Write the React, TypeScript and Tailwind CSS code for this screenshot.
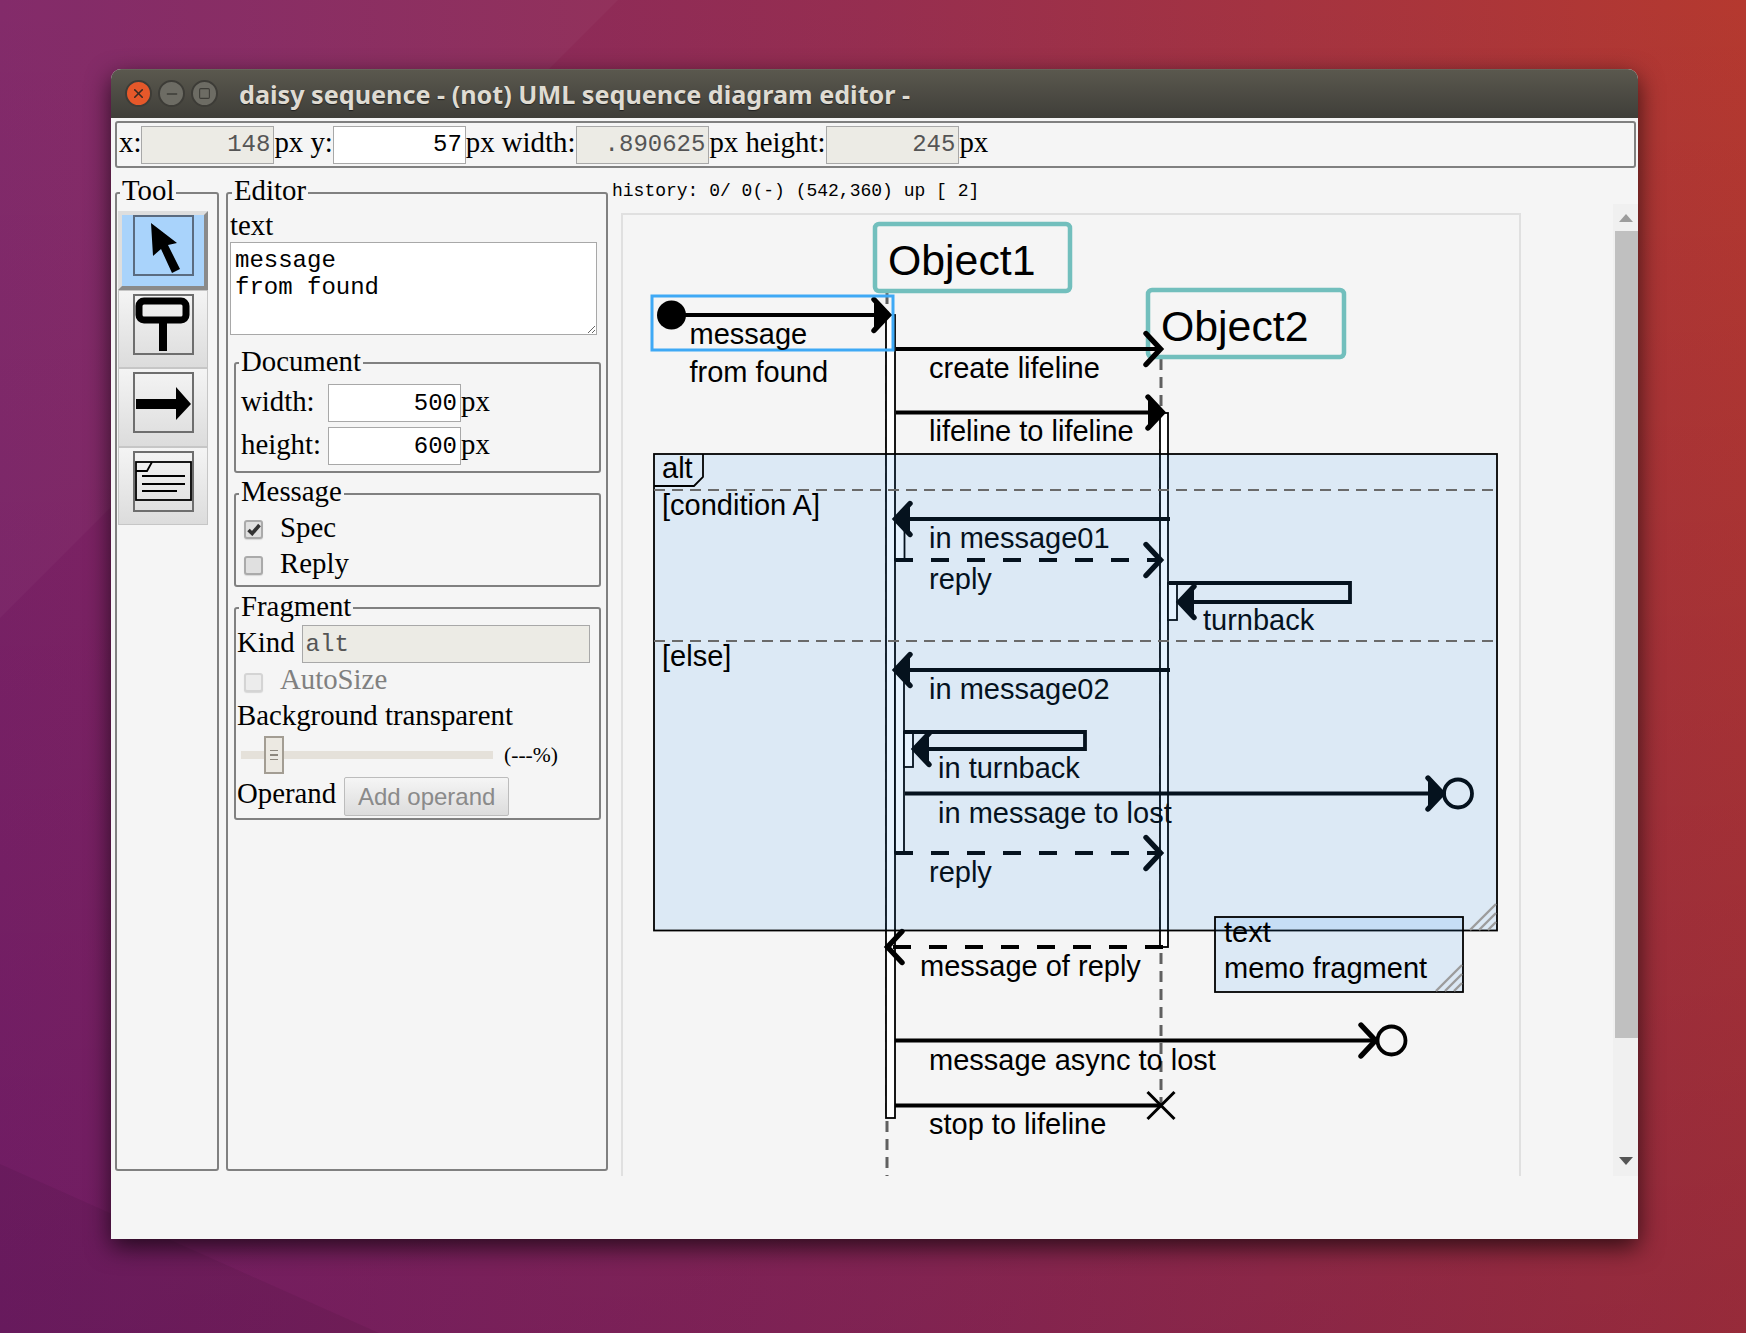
import { Minus, Square, X } from 'lucide-react';
import type { ReactNode } from 'react';

const mono = "[font-family:'Liberation_Mono',monospace]";

function Box({ legend, className, legendClass, children }: { legend: string; className: string; legendClass: string; children: ReactNode }) {
  return (
    <fieldset className={`border-2 border-[#808080] rounded-[3px] min-w-0 ${className}`}>
      <legend className={`relative leading-[33px] px-[2px] ${legendClass}`}>{legend}</legend>
      {children}
    </fieldset>
  );
}

function Field({ value, disabled, className = '' }: { value: string; disabled?: boolean; className?: string }) {
  return (
    <input
      readOnly
      value={value}
      className={`h-[38px] border border-[#a8a8a8] text-[24px] px-[3px] outline-none ${mono} ${
        disabled ? 'bg-[#ecebe5] text-[#555555]' : 'bg-white text-black'
      } ${className}`}
    />
  );
}

function Tick({ checked, disabled }: { checked?: boolean; disabled?: boolean }) {
  return (
    <span
      className={`w-[19px] h-[19px] rounded-[3px] border-2 flex items-center justify-center shadow-[0_1px_1px_#d8d8d8] ${
        disabled ? 'border-[#d4d4d4] bg-[#ececec]' : 'border-[#aaaaaa] bg-[#e0e0e0]'
      }`}
    >
      {checked && (
        <svg width="14" height="13" viewBox="0 0 14 13" className="block">
          <path d="M1.5 7 L5.2 10.5 L12.5 2" fill="none" stroke="#333333" strokeWidth="3.6" />
        </svg>
      )}
    </span>
  );
}

function ToolButton({ pressed, children }: { pressed?: boolean; children: ReactNode }) {
  return (
    <div
      className={`w-[90px] h-[78.5px] flex justify-center ${
        pressed
          ? 'bg-[#a9d3fb] border-[4px] border-t-[#dedede] border-l-[#dedede] border-r-[#8a8a8a] border-b-[#8a8a8a] pt-0'
          : 'bg-[linear-gradient(#f4f4f4,#dcdcdc)] border border-[#c6c6c6] pt-[3px]'
      }`}
    >
      <div className={`w-[61px] h-[61px] border-2 ${pressed ? 'border-[#5a6b80]' : 'border-[#6e6e6e]'}`}>
        <svg width="57" height="57" viewBox="2 2 57 57" className="block overflow-visible">
          {children}
        </svg>
      </div>
    </div>
  );
}

type MsgProps = { x1: number; x2: number; y: number; dashed?: boolean; head: 'fill' | 'open' };

// message arrow, x2 is the tip
function Msg({ x1, x2, y, dashed, head }: MsgProps) {
  const dir = x2 > x1 ? 1 : -1;
  return (
    <g>
      <line x1={x1} y1={y} x2={x2 - dir * 3} y2={y} stroke="#000" strokeWidth="3.8" strokeDasharray={dashed ? '18 18' : undefined} />
      <Head x={x2} y={y} dir={dir} head={head} />
    </g>
  );
}

function Head({ x, y, dir, head }: { x: number; y: number; dir: number; head: 'fill' | 'open' }) {
  return (
    <polyline
      points={`${x - dir * 17},${y - 15.5} ${x - dir * 2.5},${y} ${x - dir * 17},${y + 15.5}`}
      fill={head === 'fill' ? '#000' : 'none'}
      stroke="#000"
      strokeWidth="5.4"
      strokeLinecap="round"
      strokeLinejoin="miter"
    />
  );
}

function Hatch({ x, y }: { x: number; y: number }) {
  return (
    <g stroke="#9c9c9c" strokeWidth="2.4">
      <line x1={x - 27} y1={y - 1} x2={x - 1} y2={y - 27} />
      <line x1={x - 18} y1={y - 1} x2={x - 1} y2={y - 18} />
      <line x1={x - 9} y1={y - 1} x2={x - 1} y2={y - 9} />
    </g>
  );
}

function Diagram() {
  return (
    <svg
      width="896"
      height="961"
      viewBox="623 215 896 961"
      className="block [font-family:'Liberation_Sans',sans-serif] text-[29px]"
    >
      {/* lifelines */}
      <line x1="887" y1="293" x2="887" y2="1176" stroke="#606060" strokeWidth="3" strokeDasharray="11 7" />
      <line x1="1161" y1="359" x2="1161" y2="1105" stroke="#606060" strokeWidth="3" strokeDasharray="11 7" />

      {/* specs */}
      <rect x="886" y="315" width="9" height="803" fill="#fff" stroke="#000" strokeWidth="1.8" />
      <rect x="1160" y="413" width="8" height="534" fill="#fff" stroke="#000" strokeWidth="1.8" />
      <rect x="895" y="519" width="9.5" height="41" fill="#fff" stroke="#000" strokeWidth="1.8" />
      <rect x="895" y="670" width="9" height="183" fill="#fff" stroke="#000" strokeWidth="1.8" />
      <rect x="1168" y="583" width="9" height="37" fill="#fff" stroke="#000" strokeWidth="1.8" />
      <rect x="904" y="732" width="9" height="35" fill="#fff" stroke="#000" strokeWidth="1.8" />

      {/* objects */}
      <rect x="875" y="224" width="195" height="67" rx="4" fill="#f5f5f5" stroke="#72bfbd" strokeWidth="4.5" />
      <text x="888" y="275" className="text-[42.8px]">Object1</text>
      <rect x="1148" y="290" width="196" height="67" rx="4" fill="#f5f5f5" stroke="#72bfbd" strokeWidth="4.5" />
      <text x="1161" y="341" className="text-[42.8px]">Object2</text>

      {/* selected found message */}
      <circle cx="671.5" cy="315" r="14.5" fill="#000" />
      <Msg x1={671} x2={891} y={315} head="fill" />
      <rect x="652" y="296" width="241" height="54" fill="none" stroke="#3fa9f5" strokeWidth="3" />
      <text x="689.5" y="344">message</text>
      <text x="689.5" y="382">from found</text>

      <Msg x1={896} x2={1163} y={349} head="open" />
      <text x="929" y="378">create lifeline</text>
      <Msg x1={896} x2={1165} y={412.5} head="fill" />
      <text x="929" y="441">lifeline to lifeline</text>

      <Msg x1={1170} x2={893} y={519} head="fill" />
      <text x="929" y="548">in message01</text>
      <Msg x1={895} x2={1163} y={560} dashed head="open" />
      <text x="929" y="589">reply</text>

      <polyline points="1169,583 1350,583 1350,602 1179,602" fill="none" stroke="#000" strokeWidth="3.8" />
      <Head x={1177} y={602} dir={-1} head="fill" />
      <text x="1203" y="630">turnback</text>

      <Msg x1={1170} x2={893} y={670} head="fill" />
      <text x="929" y="699">in message02</text>

      <polyline points="904,732 1085,732 1085,749 914,749" fill="none" stroke="#000" strokeWidth="3.8" />
      <Head x={912} y={749} dir={-1} head="fill" />
      <text x="938" y="778">in turnback</text>

      <Msg x1={905} x2={1445} y={793.5} head="fill" />
      <circle cx="1458" cy="793.5" r="14" fill="none" stroke="#000" strokeWidth="3.8" />
      <text x="938" y="823">in message to lost</text>

      <Msg x1={895} x2={1163} y={853} dashed head="open" />
      <text x="929" y="882">reply</text>

      <Msg x1={1163} x2={885} y={947} dashed head="open" />
      <text x="920" y="976">message of reply</text>

      <Msg x1={895} x2={1378} y={1040.5} head="open" />
      <circle cx="1391.5" cy="1040.5" r="14" fill="none" stroke="#000" strokeWidth="3.8" />
      <text x="929" y="1070">message async to lost</text>

      <line x1="895" y1="1105.5" x2="1161" y2="1105.5" stroke="#000" strokeWidth="3.8" />
      <path d="M1147.5 1092 L1174.5 1119 M1174.5 1092 L1147.5 1119" stroke="#000" strokeWidth="3" fill="none" />
      <text x="929" y="1134">stop to lifeline</text>

      {/* alt fragment sits over everything with a thin tint */}
      <rect x="654" y="454" width="843" height="476.5" fill="#2d91f5" fillOpacity="0.12" stroke="#000" strokeWidth="1.8" />
      <path d="M654 486 L694 486 L703 477 L703 454" fill="none" stroke="#000" strokeWidth="1.8" />
      <text x="662" y="478">alt</text>
      <line x1="654" y1="490" x2="1497" y2="490" stroke="#6a6a6a" strokeWidth="2.2" strokeDasharray="11 7" />
      <text x="662" y="515">[condition A]</text>
      <line x1="654" y1="641" x2="1497" y2="641" stroke="#6a6a6a" strokeWidth="2.2" strokeDasharray="11 7" />
      <text x="662" y="666">[else]</text>
      <Hatch x={1497} y={931} />

      {/* memo */}
      <rect x="1215" y="917" width="248" height="75" fill="#2d91f5" fillOpacity="0.12" stroke="#000" strokeWidth="1.8" />
      <text x="1224" y="942">text</text>
      <text x="1224" y="978">memo fragment</text>
      <Hatch x={1463} y={992} />
    </svg>
  );
}

function Scrollbar() {
  return (
    <div className="w-[25px] h-[972px] bg-[#f0f0f0] flex flex-col">
      <div className="h-[27px] flex items-center justify-center">
        <svg width="14" height="8" viewBox="0 0 14 8" className="block">
          <path d="M7 0 L14 8 L0 8 Z" fill="#9c9c9c" />
        </svg>
      </div>
      <div className="ml-[2px] w-[23px] h-[807px] bg-[#c0c0c0]" />
      <div className="flex-1 flex items-end justify-center pb-[11px]">
        <svg width="14" height="8" viewBox="0 0 14 8" className="block">
          <path d="M0 0 L14 0 L7 8 Z" fill="#555555" />
        </svg>
      </div>
    </div>
  );
}

export default function App() {
  return (
    <div className="relative w-[1746px] h-[1333px] overflow-hidden bg-[linear-gradient(to_bottom,rgba(0,0,0,0),rgba(60,0,90,0.25)),linear-gradient(to_right,#7f2566,#962e50,#b5392f)]">
      <svg width="1746" height="1333" className="absolute inset-0">
        <polygon points="0,0 618,0 0,618" fill="#fff" fillOpacity="0.03" />
        <polygon points="0,1333 379,1333 0,1164" fill="#000" fillOpacity="0.06" />
      </svg>

      <div className="relative ml-[111px] mt-[69px] w-[1527px] h-[1169.5px] flex flex-col rounded-t-[10px] bg-[#f5f5f5] shadow-[0_8px_24px_rgba(0,0,0,0.68)] text-[28.8px] leading-[33px] text-black overflow-hidden">
        {/* title bar */}
        <div className="h-[49px] shrink-0 flex items-center pl-[14px] pb-[1px] bg-[linear-gradient(#5a584e,#3f3e39)] border-t border-[#66645a]">
          <span className="w-[27px] h-[27px] rounded-full bg-[#e6582a] border-2 border-[#3d3c37] flex items-center justify-center">
            <X size={15} strokeWidth={2.6} className="text-[#3a2a22]" />
          </span>
          <span className="ml-[6px] w-[27px] h-[27px] rounded-full bg-[#6d6c64] border-2 border-[#3d3c37] flex items-center justify-center">
            <Minus size={16} strokeWidth={2} className="text-[#3d3c37]" />
          </span>
          <span className="ml-[6px] w-[27px] h-[27px] rounded-full bg-[#6d6c64] border-2 border-[#3d3c37] flex items-center justify-center">
            <Square size={13} strokeWidth={2} className="text-[#3d3c37]" />
          </span>
          <span className="ml-[21px] mt-[2px] text-[25.2px] font-bold text-[#dfdbd2] [font-family:'Noto_Sans',sans-serif] [text-shadow:0_1px_1px_#222]">
            daisy sequence - (not) UML sequence diagram editor -
          </span>
        </div>

        <div className="flex-1 flex flex-col [font-family:'Liberation_Serif',serif]">
          {/* position toolbar */}
          <div className="mt-[3px] ml-[4px] mr-[2px] h-[47px] shrink-0 flex items-center pl-[2px] border-2 border-[#808080] rounded-[3px]">
            <span className="mb-[4px]">x:</span>
            <Field value="148" disabled className="w-[133px] text-right" />
            <span className="mb-[4px]">px y:</span>
            <Field value="57" className="w-[133px] text-right" />
            <span className="mb-[4px] pr-[1px]">px width:</span>
            <Field value=".890625" disabled className="w-[133px] text-right" />
            <span className="mb-[4px] pr-[1px]">px height:</span>
            <Field value="245" disabled className="w-[133px] text-right" />
            <span className="mb-[4px]">px</span>
          </div>

          <div className="flex flex-1 mt-[8px]">
            {/* tools */}
            <Box legend="Tool" className="ml-[4px] w-[104px] h-[995px] pl-[1px]" legendClass="ml-[2px] top-[-2px]">
              <div className="mt-[2px] flex flex-col">
                <ToolButton pressed>
                  <polygon points="18,8 44,28 35,30 47,54 39,58 28,34 20,41" fill="#000" />
                </ToolButton>
                <ToolButton>
                  <rect x="6" y="7" width="47" height="19" rx="5" fill="none" stroke="#000" strokeWidth="7" />
                  <rect x="26" y="26" width="8" height="31" fill="#000" />
                </ToolButton>
                <ToolButton>
                  <polygon points="3,27 43,27 43,15 58,32 43,48 43,37 3,37" fill="#000" />
                </ToolButton>
                <ToolButton>
                  <rect x="3" y="11" width="55" height="38" fill="none" stroke="#000" strokeWidth="1.8" />
                  <path d="M3 20 L14 20 L19 11" fill="none" stroke="#000" strokeWidth="1.8" />
                  <path d="M9 25 L52 25 M9 33 L52 33 M9 40 L44 40" stroke="#000" strokeWidth="1.8" />
                </ToolButton>
              </div>
            </Box>

            {/* editor */}
            <Box legend="Editor" className="ml-[7px] w-[382px] h-[995px] pl-[1px]" legendClass="ml-[3px] top-[-2px]">
              <div className="ml-[1px]">text</div>
              <textarea
                readOnly
                value={'message\nfrom found'}
                className={`ml-[1px] block w-[367px] h-[93px] bg-white border border-[#a8a8a8] text-[24px] leading-[27px] px-[4px] pt-[4px] outline-none overflow-hidden resize ${mono}`}
              />

              <Box legend="Document" className="mt-[11px] ml-[5px] w-[367px] h-[127px] pl-[5px]" legendClass="ml-[-2px] top-[-1px]">
                <div className="mt-[5px] flex items-center">
                  <span className="w-[87px] mb-[4px]">width:</span>
                  <Field value="500" className="w-[133px] text-right" />
                  <span className="mb-[4px]">px</span>
                </div>
                <div className="mt-[5px] flex items-center">
                  <span className="w-[87px] mb-[4px]">height:</span>
                  <Field value="600" className="w-[133px] text-right" />
                  <span className="mb-[4px]">px</span>
                </div>
              </Box>

              <Box legend="Message" className="mt-[4px] ml-[5px] w-[367px] h-[110px] pl-[8px]" legendClass="ml-[-5px] top-[-2px]">
                <div className="h-[36px] mt-[1px] flex items-center">
                  <Tick checked />
                  <span className="ml-[17px] mb-[4px]">Spec</span>
                </div>
                <div className="h-[36px] flex items-center">
                  <Tick />
                  <span className="ml-[17px] mb-[4px]">Reply</span>
                </div>
              </Box>

              <Box legend="Fragment" className="mt-[4px] ml-[5px] w-[367px] h-[229px] pl-[1px]" legendClass="ml-[2px] top-[-1px]">
                <div className="mt-[1px] flex items-center">
                  <span className="mb-[4px]">Kind</span>
                  <Field value="alt" disabled className="ml-[7px] w-[288px]" />
                </div>
                <div className="h-[36px] mt-[1px] pl-[7px] flex items-center text-[#808080]">
                  <Tick disabled />
                  <span className="ml-[17px] mb-[6px]">AutoSize</span>
                </div>
                <div className="mt-[-1px]">Background transparent</div>
                <div className="h-[38px] mt-[4px] flex items-center">
                  <div className="relative ml-[4px] w-[252px] h-[8px] bg-[#e5e1da]">
                    <div className="absolute left-[23px] top-[-15px] w-[20px] h-[38px] bg-[#ece9e2] border-2 border-[#a39d93] flex flex-col items-center justify-center gap-[3px]">
                      <span className="w-[8px] h-[1.5px] bg-[#8d877d]" />
                      <span className="w-[8px] h-[1.5px] bg-[#8d877d]" />
                      <span className="w-[8px] h-[1.5px] bg-[#8d877d]" />
                    </div>
                  </div>
                  <span className="ml-[11px] text-[21.6px]">(---%)</span>
                </div>
                <div className="flex items-center mt-[3px]">
                  <span className="mb-[6px]">Operand</span>
                  <button className="ml-[8px] w-[165px] h-[39px] border border-[#bcbcbc] rounded-[2px] bg-[linear-gradient(#f5f5f5,#dcdcdc)] text-[24px] text-[#8a8a8a] [font-family:'Liberation_Sans',sans-serif]">
                    Add operand
                  </button>
                </div>
              </Box>
            </Box>

            {/* canvas */}
            <div className="flex-1 min-w-0">
              <div className={`mt-[5px] ml-[4px] h-[20px] leading-[20px] text-[18px] whitespace-pre ${mono}`}>
                history: 0/ 0(-) (542,360) up [ 2]
              </div>
              <div className="mt-[3px] flex justify-between pl-[13px]">
                <div className="mt-[9px] w-[900px] h-[963px] border-l-2 border-t-2 border-r-2 border-[#e0e0e0] overflow-hidden">
                  <Diagram />
                </div>
                <Scrollbar />
              </div>
            </div>
          </div>
        </div>
      </div>
    </div>
  );
}
